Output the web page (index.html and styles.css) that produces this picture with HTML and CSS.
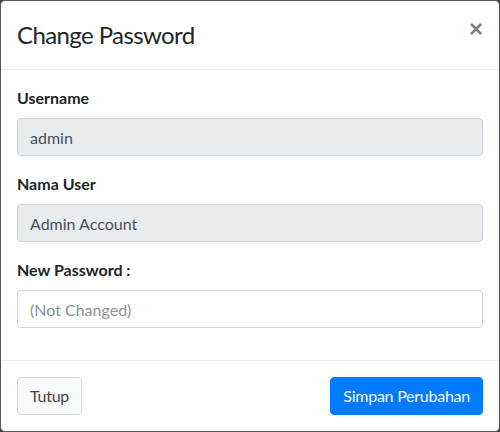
FILE: index.html
```html
<!DOCTYPE html>
<html>
<head>
  <meta name="viewport" content="width=device-width, initial-scale=1.0">
  <title>Change Password</title>
  <link rel="stylesheet" href="styles.css">
</head>
<body>
  <div class="modal-content">
    <div class="modal-header">
      <h4 class="modal-title">Change Password</h4>
      <button type="button" class="close">&times;</button>
    </div>

    <div class="modal-body">
      <div class="form-group">
        <label>Username</label>
        <input type="text" class="form-control" value="admin" disabled>
      </div>
      <div class="form-group">
        <label>Nama User</label>
        <input type="text" class="form-control" value="Admin Account" disabled>
      </div>
      <div class="form-group">
        <label>New Password :</label>
        <input type="password" class="form-control" placeholder="(Not Changed)">
      </div>
    </div>

    <div class="modal-footer">
      <button type="button" class="btn btn-default">Tutup</button>
      <button type="button" class="btn btn-primary">Simpan Perubahan</button>
    </div>
  </div>
</body>
</html>
```

FILE: styles.css
```css
* {
  box-sizing: border-box;
}

body {
  font-family: "Lato", "Liberation Sans", sans-serif;
  font-size: 16px;
  line-height: 1.5;
  color: #212529;
  margin: 0;
  padding: 0;
  background-color: #444444;
}

.modal-content {
  width: 500px;
  height: 432px;
  display: flex;
  flex-direction: column;
  background-color: #ffffff;
  border: 1px solid #555555;
  border-radius: 5px;
}

.modal-header {
  display: flex;
  align-items: flex-start;
  justify-content: space-between;
  padding: 16px;
  border-bottom: 1px solid #e9ecef;
}

.modal-title {
  margin: 0;
  font-size: 24px;
  font-weight: 400;
  line-height: 36px;
  letter-spacing: -0.6px;
}

.close {
  padding: 16px;
  margin: -16px -16px -16px auto;
  background: transparent;
  border: 0;
  font-family: "Liberation Sans", sans-serif;
  font-size: 24px;
  font-weight: 700;
  line-height: 1;
  color: #000000;
  opacity: .5;
  cursor: pointer;
}

.modal-body {
  flex: 1;
  padding: 16px;
}

.form-group {
  margin-bottom: 16px;
}

.form-group label {
  display: inline-block;
  margin-bottom: 8px;
  font-weight: 700;
}

.form-control {
  display: block;
  width: 100%;
  height: 38px;
  padding: 6px 12px;
  font-family: inherit;
  font-size: 16px;
  line-height: 1.5;
  color: #495057;
  background-color: #ffffff;
  border: 1px solid #ced4da;
  border-radius: 4px;
}

.form-control:disabled {
  background-color: #e9ecef;
}

.form-control::placeholder {
  color: #8a9096;
}

.modal-footer {
  display: flex;
  align-items: center;
  justify-content: space-between;
  padding: 12px;
  border-top: 1px solid #e9ecef;
}

.btn {
  margin: 4px;
  padding: 6px 12px;
  font-family: inherit;
  font-size: 16px;
  line-height: 1.5;
  letter-spacing: -0.25px;
  border: 1px solid transparent;
  border-radius: 4px;
  cursor: pointer;
}

.btn-default {
  background-color: #f8f9fa;
  border-color: #dddddd;
  color: #444444;
}

.btn-primary {
  background-color: #007bff;
  border-color: #007bff;
  color: #ffffff;
}
```
